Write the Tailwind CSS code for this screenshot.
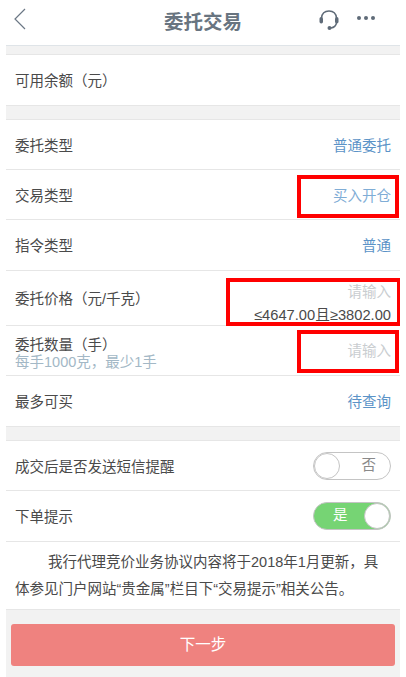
<!DOCTYPE html>
<html lang="zh">
<head>
  <meta charset="UTF-8">
  <meta name="viewport" content="width=device-width, initial-scale=1.0">
  <title>委托交易</title>
  <script src="https://cdn.jsdelivr.net/npm/@tailwindcss/browser@4"></script>
</head>
<body class="bg-white font-['Liberation_Sans','Noto_Sans_CJK_SC',sans-serif] text-[14.5px] text-[#4a4a4a]">
<div class="relative mx-[6px] h-[677px] w-[394px] overflow-hidden">
  <!-- header -->
  <div class="relative flex h-[46px] items-center justify-center border-b border-[#dfe4e8]">
    <svg class="absolute left-[7px] top-[7px]" width="14" height="24" viewBox="0 0 14 24" fill="none" stroke="#6b7785" stroke-width="1.2"><path d="M12 2 L2 12 L12 22"/></svg>
    <span class="text-[19.5px] font-bold text-[#687480]">委托交易</span>
    <svg class="absolute left-[312px] top-[8px]" width="22" height="24" viewBox="0 0 22 24" fill="none" stroke="#5f6b78" stroke-width="1.5"><path d="M3.500 10 C4 5 7 3 11 3 C15 3 18 5 18.500 10"/><path d="M18.500 15 C18 17.500 16 19.500 13 20"/><rect x="1.500" y="9" width="3.500" height="6.500" rx="1.700" fill="#5f6b78" stroke="none"/><rect x="17" y="9" width="3.500" height="6.500" rx="1.700" fill="#5f6b78" stroke="none"/><circle cx="11.500" cy="20" r="2" fill="#5f6b78" stroke="none"/></svg>
    <div class="absolute left-[351px] top-[16px] flex gap-[3px]">
      <span class="size-[4px] rounded-full bg-[#5f6b78]"></span>
      <span class="size-[4px] rounded-full bg-[#5f6b78]"></span>
      <span class="size-[4px] rounded-full bg-[#5f6b78]"></span>
    </div>
  </div>
  <div class="h-[9px] bg-[#f2f2f2] border-b border-[#e6e6e6]"></div>

  <div class="flex h-[50px] items-center px-[9px] pt-[3px]">可用余额（元）</div>
  <div class="h-[15px] bg-[#f2f2f2] border-y border-[#e6e6e6]"></div>

  <div class="divide-y divide-[#e6e6e6]">
    <div class="flex h-[50px] items-center justify-between px-[9px] pt-[4px]">
      <span>委托类型</span><span class="text-[#5b93c7]">普通委托</span>
    </div>
    <div class="flex h-[50px] items-center justify-between px-[9px] pt-[4px]">
      <span>交易类型</span><span class="text-[#7fadd6]">买入开仓</span>
    </div>
    <div class="flex h-[51px] items-center justify-between px-[9px] pt-[4px]">
      <span>指令类型</span><span class="text-[#5b93c7]">普通</span>
    </div>
    <div class="flex h-[55px] justify-between px-[9px]">
      <span class="mt-[18px]">委托价格（元/千克）</span>
      <div class="flex flex-col items-end">
        <span class="mt-[11px] text-[#c9cdd0]">请输入</span>
        <span class="mt-[1px] text-[14.7px] leading-[20px] text-[#4a4a4a]">≤4647.00且≥3802.00</span>
      </div>
    </div>
    <div class="flex h-[50px] items-center justify-between px-[9px]">
      <div class="mt-[7px] flex flex-col">
        <span class="leading-[17px]">委托数量（手）</span>
        <span class="leading-[17px] text-[#a3b8c6]">每手1000克，最少1手</span>
      </div>
      <span class="mt-[3px] text-[#c9cdd0]">请输入</span>
    </div>
    <div class="flex h-[50px] items-center justify-between px-[9px] pt-[4px]">
      <span>最多可买</span><span class="text-[#5b93c7]">待查询</span>
    </div>
  </div>
  <div class="h-[15px] bg-[#f2f2f2] border-y border-[#e6e6e6]"></div>

  <div class="divide-y divide-[#e6e6e6]">
    <div class="flex h-[50px] items-center justify-between px-[9px]">
      <span class="mt-[4px]">成交后是否发送短信提醒</span>
      <div class="relative flex h-[28px] w-[78px] items-center justify-end rounded-full border border-[#c4c4c4] bg-white pr-[14px] text-[#8a8a8a]">
        <span class="absolute left-0 top-0 size-[26px] rounded-full border border-[#c4c4c4] bg-white"></span>否
      </div>
    </div>
    <div class="flex h-[50px] items-center justify-between px-[9px]">
      <span class="mt-[4px]">下单提示</span>
      <div class="relative flex h-[28px] w-[78px] items-center rounded-full border border-[#c4c4c4] bg-[#76d474] pl-[19px] text-white">
        是<span class="absolute right-0 top-0 size-[26px] rounded-full border border-[#c4c4c4] bg-white"></span>
      </div>
    </div>
  </div>

  <div class="h-[69px] border-y border-[#e6e6e6] px-[9px] pt-[7px] leading-[27px]">
    <p class="indent-[33px] text-[#4a4a4a]">我行代理竞价业务协议内容将于2018年1月更新，具体参见门户网站“贵金属”栏目下“交易提示”相关公告。</p>
  </div>

  <div class="h-[67px] bg-[#f2f2f2] px-[5px] pt-[14px]">
    <div class="flex h-[42px] items-center justify-center rounded-[3px] bg-[#ef827f] text-[15.5px] text-white">下一步</div>
  </div>

  <!-- red annotation boxes -->
  <div class="absolute left-[291px] top-[175px] h-[43px] w-[102px] border-[4px] border-[#ff0000]"></div>
  <div class="absolute left-[220px] top-[278px] h-[48px] w-[175px] border-[4px] border-[#ff0000]"></div>
  <div class="absolute left-[291px] top-[330px] h-[43px] w-[102px] border-[4px] border-[#ff0000]"></div>
</div>
</body>
</html>
